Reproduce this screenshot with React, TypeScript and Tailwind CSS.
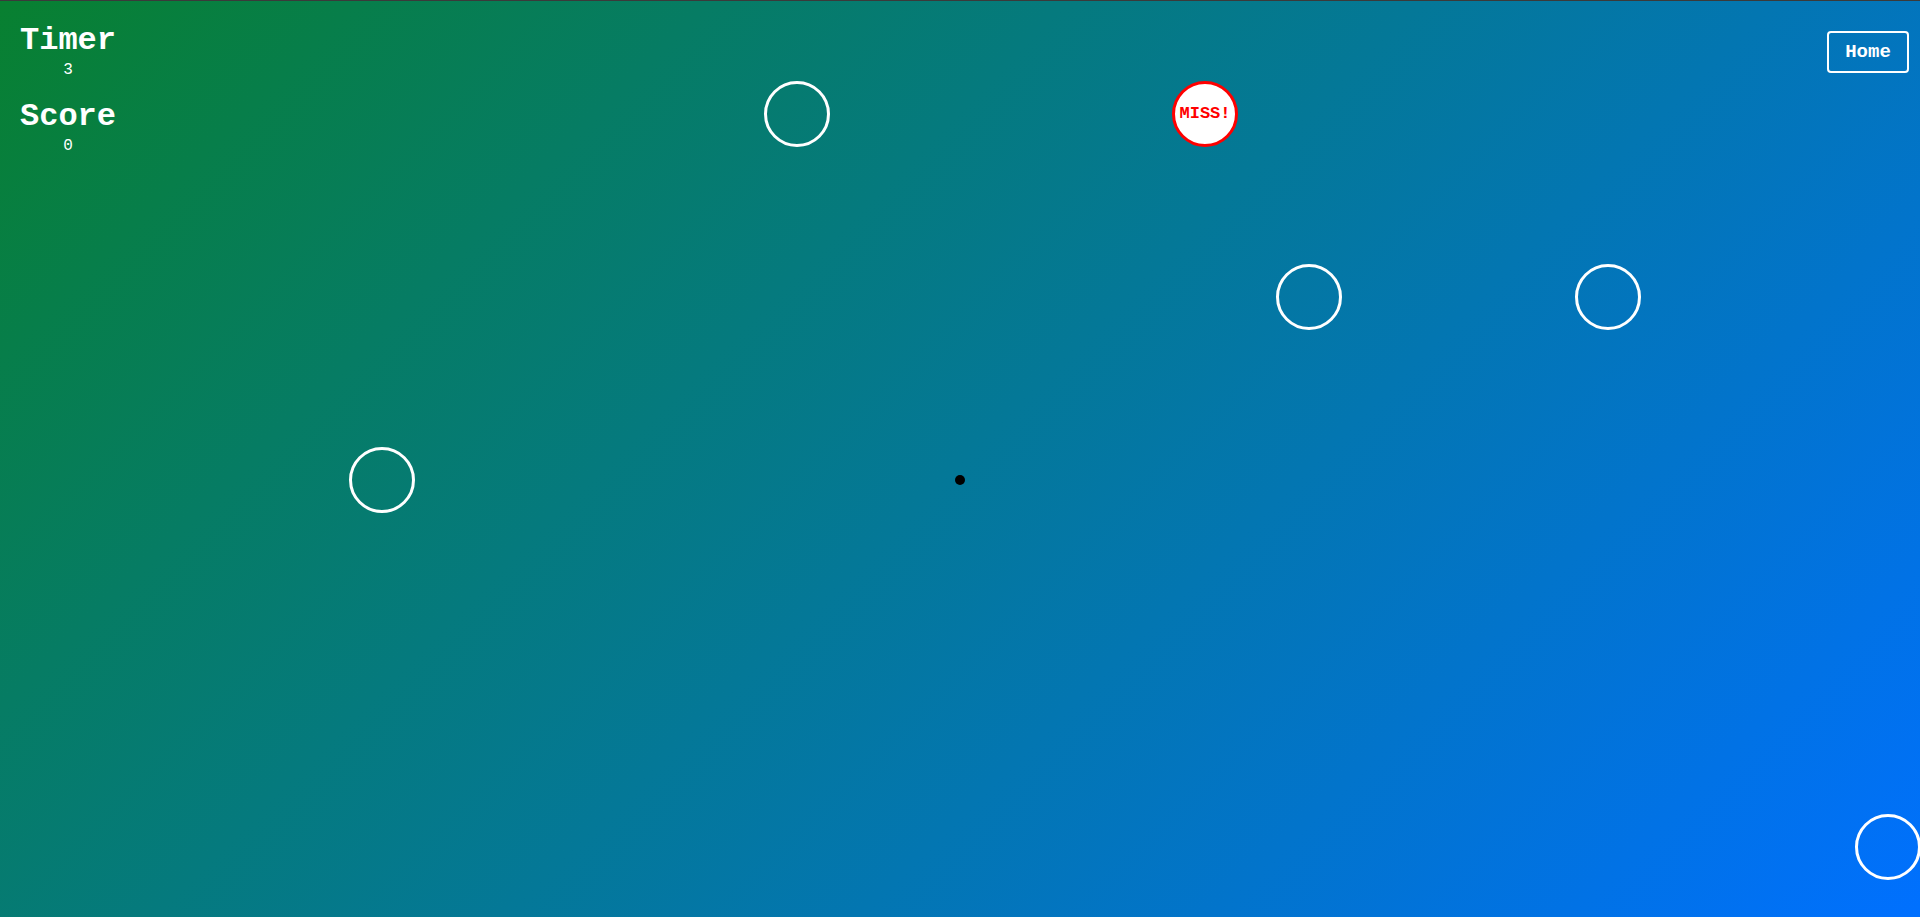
import React from "react";

const circles: { x: number; y: number; miss?: boolean }[] = [
  { x: 796.5, y: 112.5 },
  { x: 1205, y: 113, miss: true },
  { x: 1309, y: 296 },
  { x: 1608, y: 296 },
  { x: 381.5, y: 479 },
  { x: 1887.5, y: 846 },
];

export default function App() {
  return (
    <div
      className="relative h-[917px] w-full overflow-hidden border-t border-[#3a3a3a] bg-[linear-gradient(135deg,#088030,#0070ff)] text-white"
      style={{ fontFamily: '"Liberation Mono", "Courier New", monospace' }}
    >
      <div className="flex items-start justify-between">
        <div className="ml-[20px] mt-[24px] flex w-[96px] flex-col items-center">
          <div className="text-[32px] font-bold leading-[32px]">Timer</div>
          <div className="mt-[5px] text-[16px] leading-[16px]">3</div>
          <div className="mt-[23px] text-[32px] font-bold leading-[32px]">Score</div>
          <div className="mt-[5px] text-[16px] leading-[16px]">0</div>
        </div>
        <button className="mr-[11px] mt-[30px] flex h-[42px] w-[82px] items-center justify-center rounded-[4px] border-2 border-white text-[19px] font-bold text-white">
          Home
        </button>
      </div>

      {circles.map((c, i) => (
        <div
          key={i}
          className={
            c.miss
              ? "absolute flex h-[66px] w-[66px] -translate-x-1/2 -translate-y-1/2 items-center justify-center rounded-full border-[3px] border-[#ff0000] bg-white text-[17px] font-bold text-[#ff0000]"
              : "absolute h-[66px] w-[66px] -translate-x-1/2 -translate-y-1/2 rounded-full border-[3px] border-white"
          }
          style={{ left: c.x, top: c.y }}
        >
          {c.miss ? "MISS!" : null}
        </div>
      ))}

      <div
        className="absolute h-[10px] w-[10px] -translate-x-1/2 -translate-y-1/2 rounded-full bg-black"
        style={{ left: 960, top: 479 }}
      />
    </div>
  );
}
